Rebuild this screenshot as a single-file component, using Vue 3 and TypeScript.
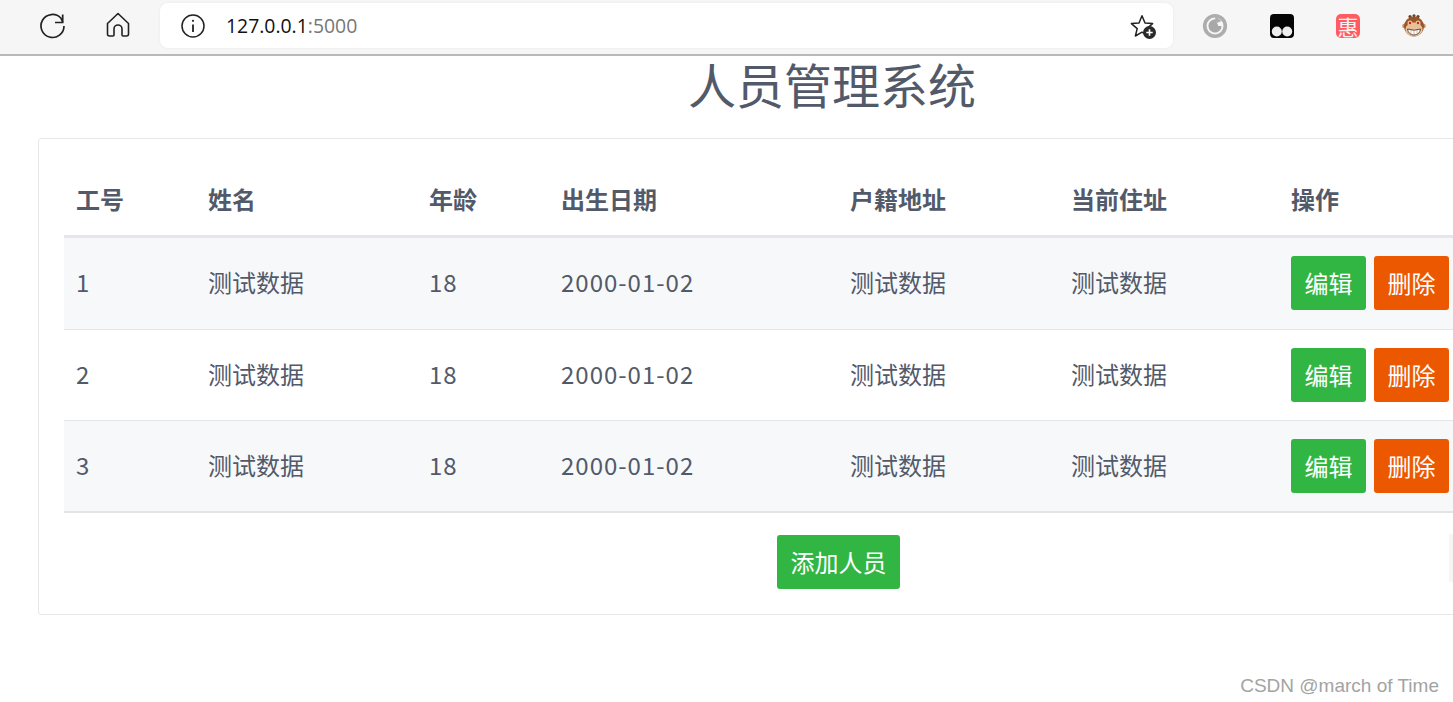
<script setup lang="ts">
const rows = [1, 2, 3].map((id) => ({
  id,
  name: '测试数据',
  age: 18,
  birth: '2000-01-02',
  home: '测试数据',
  addr: '测试数据',
}))
const headers = ['工号', '姓名', '年龄', '出生日期', '户籍地址', '当前住址', '操作']
</script>

<template>
  <div class="page">
    <header class="chrome">
      <svg class="ic reload" width="28" height="28" viewBox="0 0 28 28" fill="none" stroke="#222" stroke-width="1.7">
        <path d="M25 14A11.5 11.5 0 1 1 21.8 6L23.7 10" />
        <path d="M23.7 2.5V10.5H16" />
      </svg>
      <svg class="ic home" width="24" height="26" viewBox="0 0 24 26" fill="none" stroke="#222" stroke-width="1.6" stroke-linejoin="round">
        <path d="M12 1.5 1.5 11.5V22a2 2 0 0 0 2 2h3.5a1 1 0 0 0 1-1v-6a4 4 0 0 1 8 0v6a1 1 0 0 0 1 1h3.5a2 2 0 0 0 2-2V11.5Z" />
      </svg>
      <div class="omnibox">
        <svg class="info" width="26" height="26" viewBox="0 0 26 26" fill="none" stroke="#222" stroke-width="1.5">
          <circle cx="13" cy="13" r="11" />
          <path d="M13 11.5V19" stroke-width="1.8" />
          <circle cx="13" cy="7.8" r="1.1" fill="#222" stroke="none" />
        </svg>
        <span class="url">127.0.0.1<span class="port">:5000</span></span>
        <svg class="star" width="28" height="26" viewBox="0 0 28 26" fill="none">
          <path d="M12 1.8 15 9l7.6.6-5.8 5 1.8 7.5L12 18.2 5.4 22l1.8-7.4-5.8-5L9 9Z" stroke="#222" stroke-width="1.5" stroke-linejoin="round" />
          <circle cx="19.5" cy="18.5" r="6.5" fill="#2a2a2a" />
          <path d="M16.3 18.5h6.4M19.5 15.3v6.4" stroke="#fff" stroke-width="1.6" />
        </svg>
      </div>
      <div class="exts">
        <svg width="26" height="26" viewBox="0 0 26 26">
          <circle cx="13" cy="13" r="10.3" fill="none" stroke="#adadad" stroke-width="3.6" />
          <path d="M16.5 7.4A6.6 6.6 0 1 0 19.6 13h-3.2L13.5 6.4Z" fill="#a8a8a8" />
          <path d="M13 2.8 19.6 8l-6 2.6Z" fill="#adadad" />
        </svg>
        <svg width="24" height="24" viewBox="0 0 24 24">
          <rect width="24" height="24" rx="4" fill="#050505" />
          <circle cx="6.8" cy="17.5" r="5" fill="#eee" />
          <circle cx="17.2" cy="17.5" r="5" fill="#eee" />
        </svg>
        <div class="hui">惠</div>
        <svg width="24" height="24" viewBox="0 0 24 24">
          <circle cx="8" cy="2.6" r="1.6" fill="#6d4020" />
          <circle cx="12" cy="1.8" r="1.6" fill="#6d4020" />
          <circle cx="16" cy="2.6" r="1.6" fill="#6d4020" />
          <circle cx="2.5" cy="12" r="2.3" fill="#c98a5c" />
          <circle cx="21.5" cy="12" r="2.3" fill="#c98a5c" />
          <circle cx="12" cy="12.5" r="10" fill="#96562c" />
          <ellipse cx="12" cy="15.5" rx="8.5" ry="7" fill="#e8c19b" />
          <circle cx="8" cy="9" r="2.5" fill="#e8c19b" />
          <circle cx="16" cy="9" r="2.5" fill="#e8c19b" />
          <circle cx="8" cy="9" r="1.2" fill="#d3241c" />
          <circle cx="16" cy="9" r="1.2" fill="#d3241c" />
          <path d="M5.5 15Q12 17.5 18.5 15 17.5 21 12 21T5.5 15Z" fill="#fff" stroke="#4a2a12" stroke-width=".8" />
          <path d="M12 16V21M9 15.8V20.5M15 15.8V20.5" stroke="#8a7a70" stroke-width=".5" />
        </svg>
      </div>
    </header>

    <h1 class="title">人员管理系统</h1>

    <section class="card">
      <table>
        <colgroup>
          <col class="c1" /><col class="c2" /><col class="c3" /><col class="c4" /><col class="c5" /><col class="c6" /><col class="c7" />
        </colgroup>
        <thead>
          <tr>
            <th v-for="h in headers" :key="h">{{ h }}</th>
          </tr>
        </thead>
        <tbody>
          <tr v-for="r in rows" :key="r.id">
            <td class="num">{{ r.id }}</td>
            <td>{{ r.name }}</td>
            <td class="num">{{ r.age }}</td>
            <td class="num">{{ r.birth }}</td>
            <td>{{ r.home }}</td>
            <td>{{ r.addr }}</td>
            <td class="ops">
              <button class="btn green">编辑</button>
              <button class="btn orange">删除</button>
            </td>
          </tr>
        </tbody>
      </table>
      <div class="add">
        <button class="btn green wide">添加人员</button>
      </div>
      <div class="handle"></div>
    </section>

    <div class="mark">CSDN @march of Time</div>
  </div>
</template>

<style>
html, body { margin: 0; overflow: hidden; background: #fff; }
</style>

<style scoped>
.page {
  position: relative;
  width: 1453px;
  height: 702px;
  overflow: hidden;
  background: #fff;
  font-family: "Noto Sans CJK SC", "Open Sans", sans-serif;
  color: #525a6a;
}
.chrome {
  display: flex;
  align-items: center;
  height: 54px;
  background: #f6f6f6;
  border-bottom: 2px solid #b9b9b9;
  padding: 0 0 0 39px;
  box-sizing: content-box;
}
.ic { flex: none; }
.reload { margin-right: 39px; margin-bottom: 3px; }
.home { margin-right: 30px; margin-bottom: 5px; }
.omnibox {
  display: flex;
  align-items: center;
  width: 1013px;
  height: 45px;
  margin-bottom: 3px;
  background: #fff;
  border-radius: 8px;
  padding: 0 15px 0 20px;
  box-sizing: border-box;
  box-shadow: 0 0 3px rgba(0, 0, 0, .06);
}
.info { flex: none; }
.url {
  margin-left: 20px;
  flex: 1;
  font-family: "Open Sans", "Liberation Sans", sans-serif;
  font-size: 19.4px;
  color: #111;
}
.port { color: #777; }
.star { flex: none; margin-top: 2px; }
.exts {
  display: flex;
  align-items: center;
  gap: 42px;
  margin-left: 29px;
  margin-bottom: 3px;
}
.hui {
  width: 24px;
  height: 24px;
  border-radius: 5px;
  background: #ff5c62;
  color: #fff0f0;
  font-size: 21px;
  line-height: 24px;
  text-align: center;
}
.title {
  margin: 0;
  height: 82px;
  width: 1664px;
  text-align: center;
  font-size: 48px;
  font-weight: 400;
  line-height: 55px;
  color: #525a6a;
}
.card {
  position: relative;
  width: 1500px;
  height: 477px;
  margin-left: 38px;
  padding: 25px;
  box-sizing: border-box;
  background: #fff;
  border: 1px solid #e6e7e9;
  border-radius: 3px;
}
table {
  width: 1397px;
  border-collapse: collapse;
  table-layout: fixed;
  font-size: 24px;
}
.c1 { width: 132px; }
.c2 { width: 221px; }
.c3 { width: 132px; }
.c4 { width: 289px; }
.c5 { width: 221px; }
.c6 { width: 220px; }
th {
  height: 72px;
  padding: 0 12px 1px;
  box-sizing: border-box;
  text-align: left;
  font-weight: 700;
  line-height: 36px;
  border-bottom: 3px solid #e5e6e9;
}
td {
  height: 91px;
  padding: 0 12px 2px;
  line-height: 36px;
  border-bottom: 1px solid #e3e5e8;
  box-sizing: border-box;
}
.num { letter-spacing: 1px; }
tbody tr:first-child td { height: 93px; }
tbody tr:nth-child(odd) td { background: #f7f8fa; }
tbody tr:last-child td { height: 92px; border-bottom-width: 2px; }
td.ops { white-space: nowrap; padding-bottom: 0; }
.btn {
  display: inline-block;
  height: 54px;
  width: 75px;
  padding: 0;
  border: 1px solid transparent;
  border-radius: 3px;
  font-family: inherit;
  font-size: 24px;
  line-height: 36px;
  color: #fff;
  vertical-align: middle;
}
.green { background: #32b643; }
.orange { background: #ec5800; margin-left: 8px; }
.wide { width: 123px; }
.add {
  display: flex;
  justify-content: center;
  width: 1549px;
  margin-top: 22px;
}
.handle {
  position: absolute;
  left: 1410px;
  top: 395px;
  width: 6px;
  height: 48px;
  background: #f5f5f5;
}
.mark {
  position: absolute;
  right: 14px;
  bottom: 5px;
  font-family: "Liberation Sans", sans-serif;
  font-size: 19px;
  color: #a3a3a3;
}
</style>
